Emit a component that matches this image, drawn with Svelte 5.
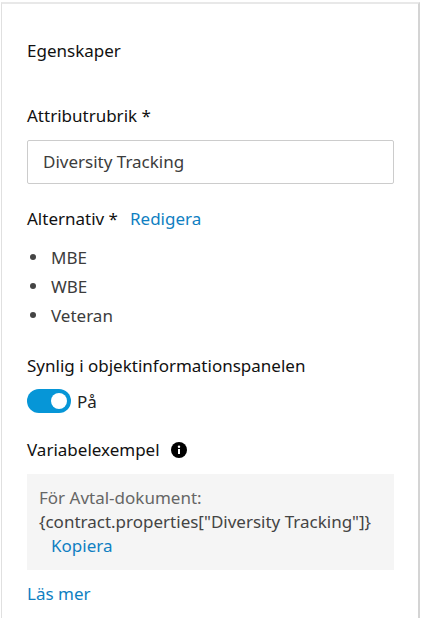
<script>
  const options = ['MBE', 'WBE', 'Veteran'];
</script>

<div class="panel">
  <h2>Egenskaper</h2>

  <label class="label title-label" for="title">Attributrubrik *</label>
  <input id="title" value="Diversity Tracking" />

  <div class="label alt-row">
    <span>Alternativ *</span>
    <a href="#edit">Redigera</a>
  </div>
  <ul>
    {#each options as opt}
      <li>{opt}</li>
    {/each}
  </ul>

  <div class="label visible-label">Synlig i objektinformationspanelen</div>
  <div class="toggle-row">
    <span class="toggle"><span class="knob"></span></span>
    <span>På</span>
  </div>

  <div class="label var-row">
    <span>Variabelexempel</span>
    <svg width="16" height="16" viewBox="0 0 16 16">
      <circle cx="8" cy="8" r="8" fill="#000" />
      <rect x="7" y="7" width="2" height="5" fill="#fff" />
      <circle cx="8" cy="4.8" r="1.2" fill="#fff" />
    </svg>
  </div>
  <div class="example">
    <div>För Avtal-dokument:</div>
    <div class="code">&#123;contract.properties["Diversity Tracking"]&#125;</div>
    <a href="#copy">Kopiera</a>
  </div>

  <a class="more" href="#more">Läs mer</a>
</div>

<style>
  :global(body) {
    background: #fff;
    font-family: "Noto Sans", "Open Sans", sans-serif;
  }

  .panel {
    box-sizing: border-box;
    width: 419px;
    height: 618px;
    margin-left: 1px;
    margin-top: 2px;
    padding: 37px 24px 0 25px;
    border-top: 2px solid #e8e8e8;
    border-left: 1px solid #e0e0e0;
    border-right: 2px solid #d4d4d4;
    font-size: 17px;
    color: #3c3c3c;
    overflow: hidden;
  }

  h2 {
    margin: 0;
    font-size: 17px;
    font-weight: 400;
    line-height: 20px;
    color: #111;
  }

  .label {
    color: #111;
    line-height: 20px;
  }

  .title-label {
    display: block;
    margin-top: 45px;
  }

  input {
    display: block;
    box-sizing: border-box;
    width: 367px;
    height: 44px;
    margin-top: 14px;
    padding: 0 15px 2px;
    border: 1px solid #ccc;
    border-radius: 2px;
    outline: none;
    font: inherit;
    color: #3c3c3c;
  }

  .alt-row {
    display: flex;
    gap: 12px;
    margin-top: 25px;
  }

  a {
    color: #0f7fc2;
    text-decoration: none;
  }

  ul {
    margin: 14px 0 0;
    padding: 0 0 0 24px;
    list-style: none;
  }

  li {
    position: relative;
    height: 29px;
    line-height: 29px;
  }

  li::before {
    content: "";
    position: absolute;
    left: -21px;
    top: 11px;
    width: 6px;
    height: 6px;
    border-radius: 50%;
    background: #444;
  }

  .visible-label {
    margin-top: 26px;
  }

  .toggle-row {
    display: flex;
    align-items: center;
    gap: 6px;
    margin-top: 13px;
    height: 24px;
    color: #222;
  }

  .toggle {
    display: flex;
    align-items: center;
    justify-content: flex-end;
    box-sizing: border-box;
    width: 44px;
    height: 24px;
    padding-right: 4px;
    border-radius: 12px;
    background: #0696d7;
  }

  .knob {
    width: 16px;
    height: 16px;
    border-radius: 50%;
    background: #fff;
  }

  .var-row {
    display: flex;
    align-items: center;
    gap: 11px;
    margin-top: 27px;
  }

  .example {
    box-sizing: border-box;
    width: 367px;
    height: 96px;
    margin-top: 14px;
    padding: 12px 12px;
    background: #f5f5f5;
    line-height: 24px;
    color: #666;
  }

  .code {
    white-space: nowrap;
    color: #444;
  }

  .example a {
    margin-left: 12px;
  }

  .more {
    display: block;
    margin-top: 14px;
    line-height: 20px;
  }
</style>
